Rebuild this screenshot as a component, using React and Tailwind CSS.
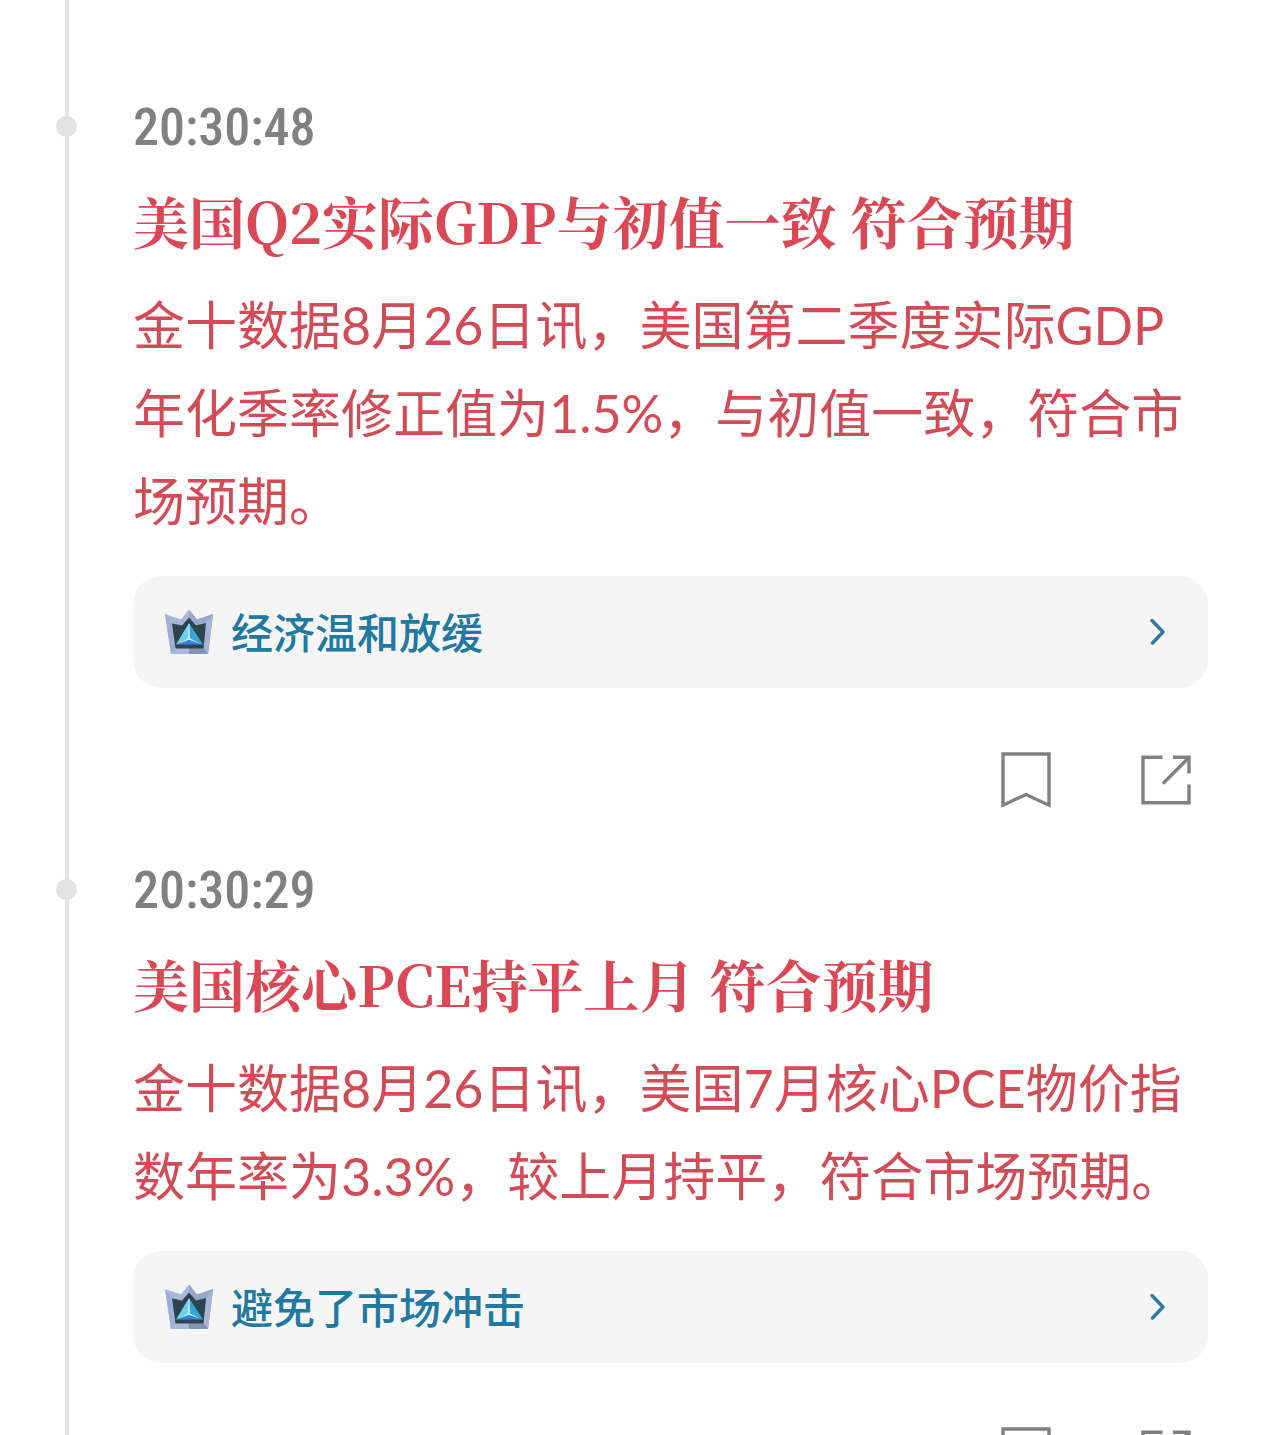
const news = [
  {
    id: 1,
    time: "20:30:48",
    title: "美国Q2实际GDP与初值一致 符合预期",
    body: "金十数据8月26日讯，美国第二季度实际GDP年化季率修正值为1.5%，与初值一致，符合市场预期。",
    topic: "经济温和放缓",
  },
  {
    id: 2,
    time: "20:30:29",
    title: "美国核心PCE持平上月 符合预期",
    body: "金十数据8月26日讯，美国7月核心PCE物价指数年率为3.3%，较上月持平，符合市场预期。",
    topic: "避免了市场冲击",
  },
];

function CrownIcon() {
  return (
    <svg viewBox="0 0 48 46" className="h-[46px] w-12 shrink-0" aria-hidden="true">
      <path d="M0 5 16 10.5 24 0.5 32 10.5 48 5 43 45H6Z" fill="#a9b8d8" />
      <path d="M24 0.5 32 10.5 48 5 43 45H24Z" fill="#98a8cc" />
      <path d="M0 5 7 14.5 10.5 40 6 45Z" fill="#9fafd3" />
      <path d="M48 5 41 14 38.5 40 43 45Z" fill="#a6b5d7" />
      <path d="M10.5 39H24V45H6Z" fill="#a9b8dc" />
      <path d="M24 39H38.5L43 45H24Z" fill="#8493b8" />
      <path d="M7 14.5 17 16.5 24 8.5 31 16.5 41 14 38.5 39.5H10.5Z" fill="#2e444e" />
      <path d="M24 14 11 35.5 24 30Z" fill="#69d3ee" />
      <path d="M24 14 38 35.5 24 30Z" fill="#35a5dc" />
      <path d="M11 35.5 24 30 38 35.5Z" fill="#3a83dc" />
      <path d="M23.6 15H24.4L25 29.5 37 35.2 24 30.8 12 35.2 23 29.5Z" fill="#c5f1fb" />
    </svg>
  );
}

function ChevronIcon() {
  return (
    <svg
      viewBox="0 0 16 28"
      className="h-7 w-4 shrink-0"
      fill="none"
      stroke="#2f7c9f"
      strokeWidth="3.4"
      strokeLinecap="round"
      strokeLinejoin="round"
      aria-hidden="true"
    >
      <path d="M2 2.5 13 14 2.5 25" />
    </svg>
  );
}

function BookmarkIcon() {
  return (
    <svg
      viewBox="0 0 50 56"
      className="h-14 w-[50px]"
      fill="none"
      stroke="#808080"
      strokeWidth="3.4"
      aria-hidden="true"
    >
      <path d="M2 2H48V53.2L25 42.5 2 53.2Z" />
    </svg>
  );
}

function ShareIcon() {
  return (
    <svg
      viewBox="0 0 50 50"
      className="h-[50px] w-[50px]"
      fill="none"
      stroke="#808080"
      strokeWidth="3.4"
      aria-hidden="true"
    >
      <path d="M21.5 2.2H2V47.8H48V29.5" />
      <path d="M32 2.2H48V18.5" />
      <path d="M47 3.5 23 27.5" strokeLinecap="round" />
    </svg>
  );
}

function NewsItem({ item }) {
  return (
    <li className="pb-[43px]">
      <div className="relative">
        <span className="absolute top-6 -left-[77px] h-[21px] w-[21px] rounded-full bg-[#e3e3e3]" />
        <time className="block font-['Roboto_Condensed','Liberation_Sans_Narrow','Roboto',sans-serif] text-[52px] leading-[72px] font-medium text-[#808080]">
          {item.time}
        </time>
      </div>

      <h2 className="mt-4 font-['Noto_Serif_CJK_SC','Liberation_Serif','Noto_Sans_CJK_SC',serif] text-[56px] leading-[80px] font-bold text-[#d94854]">
        {item.title}
      </h2>
      <p className="mt-[21px] font-['Lato','Noto_Sans_CJK_SC',sans-serif] text-[52px] leading-[88px] text-[#d14c56]">
        {item.body}
      </p>

      {/* Related topic */}
      <button
        type="button"
        className="mt-[31px] flex h-28 w-full items-center rounded-[28px] bg-[#f5f5f5] pr-[42px] pl-8 text-left"
      >
        <CrownIcon />
        <span className="ml-[18px] flex-1 pb-[3px] font-['Noto_Sans_CJK_SC',sans-serif] text-[42px] leading-[60px] font-medium text-[#22799f]">
          {item.topic}
        </span>
        <ChevronIcon />
      </button>

      {/* Actions */}
      <div className="mt-15 flex h-16 items-center justify-end gap-[90px] pr-[17px]">
        <button type="button" aria-label="收藏">
          <BookmarkIcon />
        </button>
        <button type="button" aria-label="分享">
          <ShareIcon />
        </button>
      </div>
    </li>
  );
}

function App() {
  return (
    <main className="flex h-screen overflow-hidden bg-[#fefefe]">
      <div className="ml-[65px] w-1 shrink-0 bg-[#e3e3e3]" />
      <ol className="ml-16 min-w-0 flex-1 pt-[92px] pr-14">
        {news.map((item) => (
          <NewsItem key={item.id} item={item} />
        ))}
      </ol>
    </main>
  );
}

export default App;
